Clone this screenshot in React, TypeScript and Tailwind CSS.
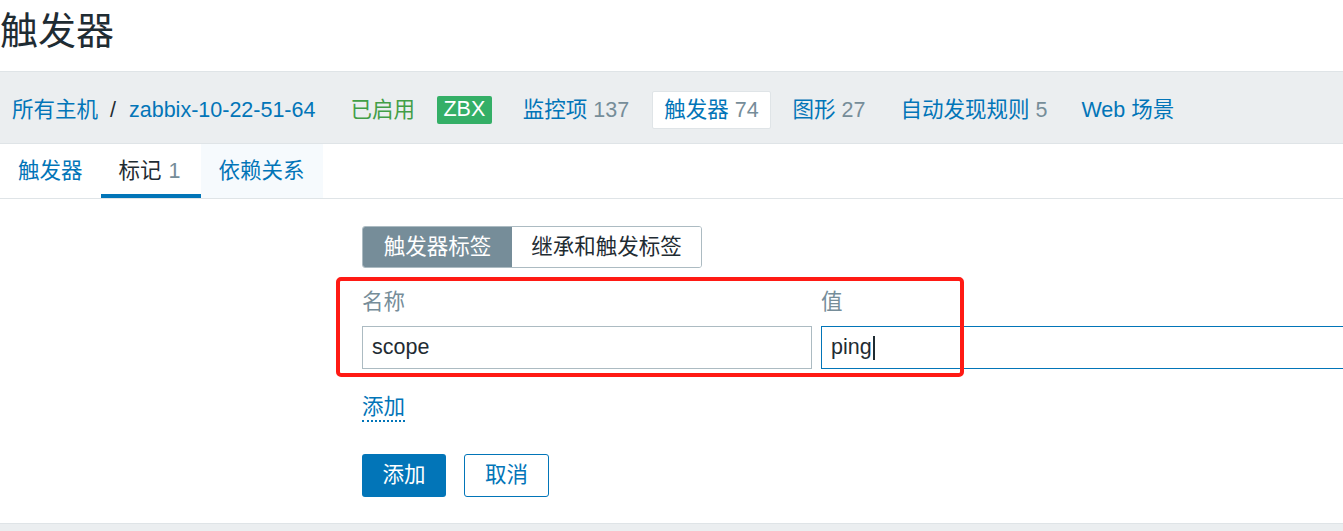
import React from "react";

const font = {
  fontFamily: '"Liberation Sans", "Noto Sans CJK SC", Arial, sans-serif',
};

export default function App() {
  return (
    <div className="relative w-[1343px] h-[531px] overflow-hidden bg-white" style={font}>
      {/* Title */}
      <div className="h-[71px] flex items-center">
        <h1 className="ml-0 text-[38px] leading-none text-[#1f2c33] font-normal mt-[-10px]">触发器</h1>
      </div>

      {/* Host nav bar */}
      <div className="h-[73px] pt-[5px] bg-[#ebeef0] border-y border-[#dfe4e7] flex items-center text-[21.5px] text-[#0275b8] whitespace-nowrap">
        <span className="ml-[12px]">所有主机</span>
        <span className="ml-[12px] text-[#1f2c33]">/</span>
        <span className="ml-[13px]">zabbix-10-22-51-64</span>
        <span className="ml-[35px] text-[#429e47]">已启用</span>
        <span className="ml-[22px] h-[28px] px-[6.5px] bg-[#34af67] text-white rounded-[2px] flex items-center leading-none">ZBX</span>
        <span className="ml-[31px]">监控项 <span className="text-[#768d99]">137</span></span>
        <span className="ml-[23px] h-[38px] px-[11px] bg-white border border-[#dfe4e7] rounded-[2px] flex items-center">触发器 <span className="ml-[6px] text-[#768d99]">74</span></span>
        <span className="ml-[22px]">图形 <span className="text-[#768d99]">27</span></span>
        <span className="ml-[35px]">自动发现规则 <span className="text-[#768d99]">5</span></span>
        <span className="ml-[34px]">Web 场景</span>
      </div>

      {/* Tabs */}
      <div className="h-[55px] flex border-b border-[#dfe4e7] text-[21.5px] whitespace-nowrap">
        <div className="px-[18px] pt-[4px] flex items-center text-[#0275b8] border-b-4 border-transparent">触发器</div>
        <div className="px-[18px] pt-[4px] flex items-center text-[#1f2c33] border-b-4 border-[#0275b8]">
          标记 <span className="ml-[7px] mr-[2px] text-[#768d99]">1</span>
        </div>
        <div className="px-[18px] pt-[4px] flex items-center text-[#0275b8] bg-[#f6fafd] border-b-4 border-transparent">依赖关系</div>
      </div>

      {/* Form */}
      <div className="pl-[362px] pt-[27px] text-[21.5px]">
        <div className="flex w-[340px] h-[42px] border border-[#acbbc2] rounded-[3px] overflow-hidden">
          <div className="w-[149px] shrink-0 bg-[#768d99] text-white flex items-center justify-center">触发器标签</div>
          <div className="flex-1 bg-white text-[#1f2c33] flex items-center justify-center">继承和触发标签</div>
        </div>

        <div className="flex mt-[21px] text-[#768d99]">
          <div className="w-[459px] shrink-0 h-[26px] flex items-center">名称</div>
          <div className="h-[26px] flex items-center">值</div>
        </div>

        <div className="flex mt-[11px]">
          <div className="w-[450px] shrink-0 h-[43px] border border-[#acbbc2] flex items-center pl-[9px] text-[#1f2c33]">scope</div>
          <div className="ml-[9px] w-[600px] shrink-0 h-[43px] border border-[#0275b8] flex items-center pl-[9px] text-[#1f2c33]">
            ping<span className="inline-block w-[2px] h-[24px] bg-[#1f2c33] ml-[1px]" />
          </div>
        </div>

        <div className="mt-[25px] h-[28px] flex items-center">
          <span className="text-[#0275b8] border-b-2 border-dotted border-[#0275b8] leading-[26px]">添加</span>
        </div>

        <div className="flex mt-[32px] gap-[18px]">
          <button className="w-[84px] h-[43px] bg-[#0275b8] text-white rounded-[3px] flex items-center justify-center">添加</button>
          <button className="w-[85px] h-[43px] border border-[#0275b8] text-[#0275b8] bg-white rounded-[3px] flex items-center justify-center">取消</button>
        </div>
      </div>

      {/* Bottom band */}
      <div className="absolute left-0 right-0 top-[523px] h-[8px] bg-[#ebeef0] border-t border-[#dfe4e7]" />

      {/* Red annotation box */}
      <div className="absolute left-[336px] top-[277px] w-[628px] h-[100px] border-[4px] border-[#ff1a14] rounded-[5px] pointer-events-none" />
    </div>
  );
}
